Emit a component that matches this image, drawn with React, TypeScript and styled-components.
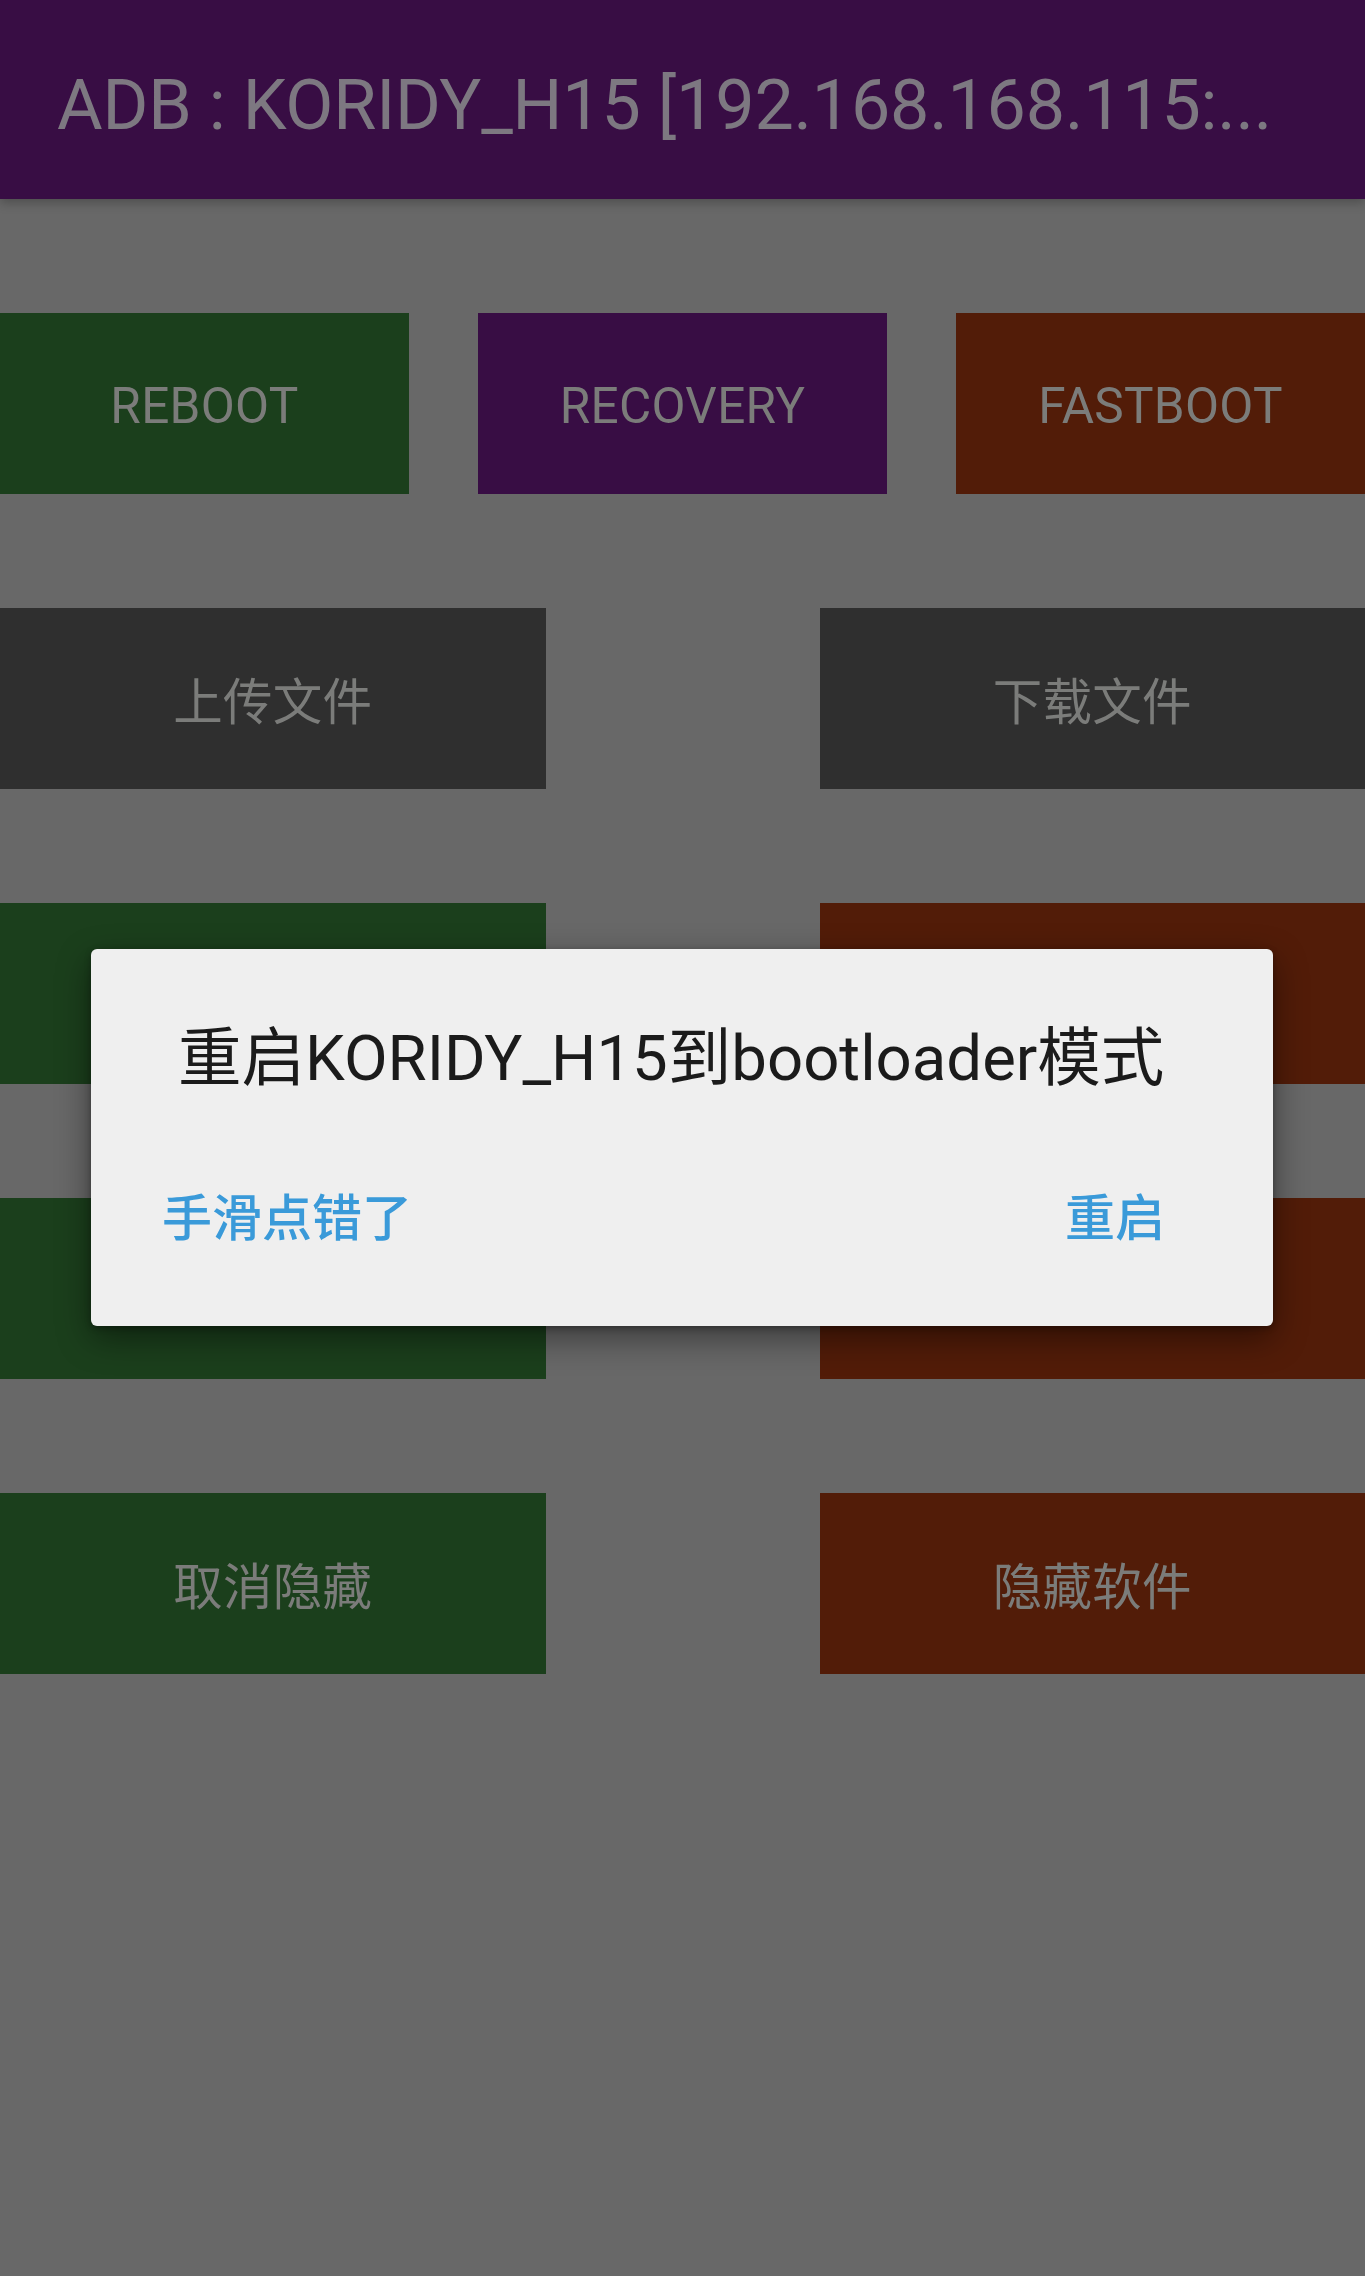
import React from "react";
import styled, { createGlobalStyle } from "styled-components";

const Global = createGlobalStyle`
  html, body { margin: 0; padding: 0; }
  body {
    background: #686868;
    font-family: Roboto, "Noto Sans CJK SC", sans-serif;
  }
`;

const Screen = styled.div`
  position: relative;
  width: 1365px;
  min-height: 2276px;
  background: #686868;
  overflow: hidden;
`;

const AppBar = styled.header`
  height: 199px;
  background: #380d44;
  display: flex;
  align-items: center;
  padding-left: 57px;
  box-sizing: border-box;
  box-shadow: 0 4px 10px rgba(0, 0, 0, 0.25);
  position: relative;
  z-index: 1;
`;

const Title = styled.h1`
  margin: 0;
  font-family: Roboto, "Noto Sans CJK SC", sans-serif;
  font-weight: 400;
  font-size: 70px;
  line-height: 1;
  letter-spacing: -0.2px;
  color: #7d7881;
  white-space: nowrap;
  padding-top: 10px;
`;

const Rows = styled.main`
  display: flex;
  flex-direction: column;
  gap: 114px;
  padding-top: 114px;
`;

const Row = styled.div<{ $cols: number; $gap: number }>`
  display: grid;
  grid-template-columns: repeat(${(p) => p.$cols}, 1fr);
  column-gap: ${(p) => p.$gap}px;
  height: 181px;
`;

const Btn = styled.div<{ $bg: string; $latin?: boolean }>`
  background: ${(p) => p.$bg};
  display: flex;
  align-items: center;
  justify-content: center;
  font-family: Roboto, "Noto Sans CJK SC", sans-serif;
  font-size: 49.5px;
  color: #7b7c7a;
  text-transform: uppercase;
  letter-spacing: 0.3px;
  padding-top: ${(p) => (p.$latin ? 5 : 0)}px;
  box-sizing: border-box;
`;

const Dialog = styled.div`
  position: absolute;
  left: 91px;
  top: 949px;
  width: 1182px;
  height: 377px;
  box-sizing: border-box;
  background: #efefef;
  border-radius: 6px;
  box-shadow: 0 12px 34px rgba(0, 0, 0, 0.45), 0 2px 6px rgba(0, 0, 0, 0.3);
  display: flex;
  flex-direction: column;
  z-index: 2;
`;

const DialogTitle = styled.div`
  padding: 71px 0 0 87px;
  font-family: Roboto, "Noto Sans CJK SC", sans-serif;
  font-size: 63.5px;
  line-height: 78px;
  color: #1b1b1b;
  white-space: nowrap;
`;

const Actions = styled.div`
  display: flex;
  justify-content: space-between;
  align-items: center;
  padding: 0 108px 0 71px;
  margin-top: 86px;
`;

const ActionBtn = styled.button`
  border: none;
  background: none;
  padding: 0;
  font-family: "Noto Sans CJK SC", sans-serif;
  font-size: 50px;
  line-height: 60px;
  font-weight: 500;
  color: #3a9ad9;
`;

const GREEN = "#1b3f1c";
const PURPLE = "#380d44";
const ORANGE = "#521c08";
const GRAY = "#2f2f2f";

export default function App() {
  return (
    <Screen>
      <Global />
      <AppBar>
        <Title>ADB : KORIDY_H15 [192.168.168.115:...</Title>
      </AppBar>
      <Rows>
        <Row $cols={3} $gap={69}>
          <Btn $bg={GREEN} $latin>Reboot</Btn>
          <Btn $bg={PURPLE} $latin>Recovery</Btn>
          <Btn $bg={ORANGE} $latin>Fastboot</Btn>
        </Row>
        <Row $cols={2} $gap={274}>
          <Btn $bg={GRAY}>上传文件</Btn>
          <Btn $bg={GRAY}>下载文件</Btn>
        </Row>
        <Row $cols={2} $gap={274}>
          <Btn $bg={GREEN} />
          <Btn $bg={ORANGE} />
        </Row>
        <Row $cols={2} $gap={274}>
          <Btn $bg={GREEN} />
          <Btn $bg={ORANGE} />
        </Row>
        <Row $cols={2} $gap={274}>
          <Btn $bg={GREEN}>取消隐藏</Btn>
          <Btn $bg={ORANGE}>隐藏软件</Btn>
        </Row>
      </Rows>
      <Dialog role="dialog">
        <DialogTitle>重启KORIDY_H15到bootloader模式</DialogTitle>
        <Actions>
          <ActionBtn>手滑点错了</ActionBtn>
          <ActionBtn>重启</ActionBtn>
        </Actions>
      </Dialog>
    </Screen>
  );
}
